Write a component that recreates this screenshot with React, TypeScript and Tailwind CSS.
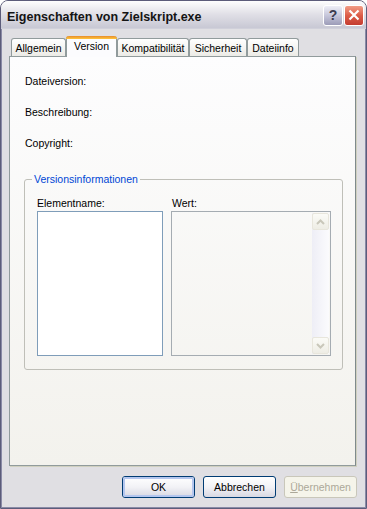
import { Fragment } from "react";

const font = "font-['Liberation_Sans',Arial,sans-serif]";

const tabs = [
  { label: "Allgemein", w: "w-[55px]" },
  { label: "Version", w: "w-[51px]", active: true },
  { label: "Kompatibilität", w: "w-[72px]" },
  { label: "Sicherheit", w: "w-[58px]" },
  { label: "Dateiinfo", w: "w-[52px]" },
];

function Arrow({ up }: { up?: boolean }) {
  return (
    <svg width="9" height="6" viewBox="0 0 9 6">
      <path
        d={up ? "M1 5 L4.5 1.5 L8 5" : "M1 1 L4.5 4.5 L8 1"}
        fill="none"
        stroke="#c9c7ba"
        strokeWidth="2"
      />
    </svg>
  );
}

function ScrollButton({ up }: { up?: boolean }) {
  return (
    <div className="h-[17px] w-[17px] shrink-0 rounded-[2px] border border-[#e8e6dc] bg-gradient-to-b from-[#fbfbf7] to-[#eeede5] flex items-center justify-center">
      <Arrow up={up} />
    </div>
  );
}

function Button({
  children,
  variant,
}: {
  children: React.ReactNode;
  variant?: "default" | "disabled";
}) {
  if (variant === "disabled") {
    return (
      <div className="w-[73px] h-[22px] rounded-[3px] border border-[#c9c7ba] bg-[#f5f4ea] text-[#aca899] flex items-center justify-center">
        {children}
      </div>
    );
  }
  return (
    <div className="w-[73px] h-[22px] rounded-[3px] border border-[#003c74] bg-gradient-to-b from-white via-[#f2f2f6] to-[#d8d8e2] text-black flex items-center justify-center">
      <div
        className={
          variant === "default"
            ? "w-full h-full rounded-[2px] border-2 border-[#b4c6ee] flex items-center justify-center"
            : "w-full h-full flex items-center justify-center"
        }
      >
        {children}
      </div>
    </div>
  );
}

export default function App() {
  return (
    <div className={`${font} w-[367px] h-[509px] text-[10.5px] leading-[13px] text-black bg-white`}>
      <div className="w-full h-full rounded-t-[8px] border border-[#5c5c7a] bg-[#e0dfe3] flex flex-col overflow-hidden">
        {/* Title bar */}
        <div className="h-[28px] shrink-0 flex items-center bg-gradient-to-b from-[#fefefe] via-[#e0dfe6] to-[#c8c8d4] border-b border-[#d0d0da]">
          <span className="ml-[6px] mt-[5px] text-[12.5px] font-bold text-[#141414]">
            Eigenschaften von Zielskript.exe
          </span>
          <div className="ml-auto mr-[2px] mt-[1px] flex gap-[1px]">
            <div className="w-[20px] h-[21px] rounded-[3px] border border-white bg-gradient-to-b from-[#eeeef6] via-[#c6c6da] to-[#9c9cb8] flex items-center justify-center text-[14px] font-bold text-[#3c3c50]">
              ?
            </div>
            <div className="w-[20px] h-[21px] rounded-[3px] border border-white bg-gradient-to-b from-[#f09c86] via-[#dc5c48] to-[#c43c30] flex items-center justify-center">
              <svg width="12" height="12" viewBox="0 0 12 12">
                <path d="M1.5 1.5 L10.5 10.5 M10.5 1.5 L1.5 10.5" stroke="white" strokeWidth="2.2" />
              </svg>
            </div>
          </div>
        </div>

        {/* Body */}
        <div className="flex-1 flex flex-col pl-[7px] pr-[8px] border-x border-b border-[#8a8aa6]">
          {/* Tab strip */}
          <div className="mt-[7px] h-[20px] flex items-end pl-[2px] relative z-10">
            {tabs.map((t) => (
              <Fragment key={t.label}>
                {t.active ? (
                  <div
                    className={`${t.w} h-[21px] -mb-px rounded-t-[3px] border-x border-[#919b9c] bg-[#fcfcfe] flex flex-col`}
                  >
                    <div className="h-[3px] rounded-t-[3px] bg-gradient-to-b from-[#e68b2c] to-[#ffc73c] -mx-px" />
                    <div className="flex-1 flex items-start justify-center pt-[1px]">{t.label}</div>
                  </div>
                ) : (
                  <div
                    className={`${t.w} h-[18px] rounded-t-[3px] border border-b-0 border-[#919b9c] bg-gradient-to-b from-white to-[#ecebe6] flex items-center justify-center pt-[2px]`}
                  >
                    {t.label}
                  </div>
                )}
              </Fragment>
            ))}
          </div>

          {/* Tab panel */}
          <div className="w-[347px] h-[410px] border border-[#919b9c] border-r-[#7f8a8c] bg-gradient-to-b from-[#fdfdfe] to-[#f3f2ed] pl-[14px] pt-[18px] flex flex-col shadow-[1px_1px_0_#d0d0bf]">
            <div className="ml-px flex flex-col gap-[18px]">
              <div>Dateiversion:</div>
              <div>Beschreibung:</div>
              <div>Copyright:</div>
            </div>

            {/* Group box */}
            <div className="relative mt-[29px] w-[319px] h-[191px] rounded-[3px] border border-[#bfbfb8] pl-[12px] pt-[17px]">
              <span className="absolute -top-[7px] left-[7px] px-[2px] bg-[#fafaf9] text-[#0046d5]">
                Versionsinformationen
              </span>
              <div className="flex gap-[8px]">
                <div className="flex flex-col">
                  <div className="h-[13px] mb-px">Elementname:</div>
                  <div className="w-[126px] h-[145px] border border-[#7f9db9] bg-white" />
                </div>
                <div className="flex flex-col">
                  <div className="h-[13px] mb-px ml-px">Wert:</div>
                  <div className="w-[160px] h-[145px] border border-[#a5acb2] p-px flex justify-end">
                    <div className="w-[17px] h-full flex flex-col bg-gradient-to-r from-[#eeeef6] to-[#fbfbfd]">
                      <ScrollButton up />
                      <div className="flex-1" />
                      <ScrollButton />
                    </div>
                  </div>
                </div>
              </div>
            </div>
          </div>

          {/* Buttons */}
          <div className="mt-[10px] flex justify-end gap-[8px]">
            <Button variant="default">OK</Button>
            <Button>Abbrechen</Button>
            <Button variant="disabled">
              <span>
                <span className="underline">Ü</span>bernehmen
              </span>
            </Button>
          </div>
        </div>
      </div>
    </div>
  );
}
